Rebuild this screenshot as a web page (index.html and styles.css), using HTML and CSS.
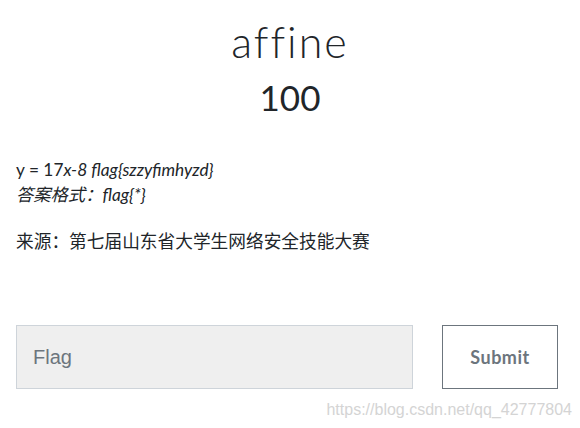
FILE: index.html
```html
<!DOCTYPE html>
<html>
<head>
<meta charset="utf-8">
<link rel="stylesheet" href="styles.css">
</head>
<body>
<div class="modal">
  <h2 class="name">affine</h2>
  <h3 class="value">100</h3>
  <div class="desc">
    <p class="formula">y = 17<em>x-8 flag{szzyfimhyzd}</em><br><em>答案格式：flag{*}</em></p>
    <p class="source">来源：第七届山东省大学生网络安全技能大赛</p>
  </div>
  <form class="submit-row">
    <input class="flag-input" type="text" placeholder="Flag">
    <button class="submit-btn" type="button">Submit</button>
  </form>
  <div class="watermark">https://blog.csdn.net/qq_42777804</div>
</div>
</body>
</html>
```
FILE: styles.css
```css
html, body {
  margin: 0;
  padding: 0;
  background: #fff;
}
body {
  font-family: Lato, "Noto Sans CJK SC", sans-serif;
  color: #212529;
}
.modal {
  padding: 0 16px;
}
.name {
  margin: 0;
  padding-top: 17px;
  text-align: center;
  font-weight: 300;
  font-size: 43px;
  line-height: 50px;
  letter-spacing: 2px;
}
.value {
  margin: 8px 0 0;
  text-align: center;
  font-weight: 400;
  font-size: 35px;
  line-height: 44px;
}
.desc {
  margin-top: 38px;
  font-size: 17.3px;
  line-height: 25px;
}
.desc p {
  margin: 0 0 22px;
}
.desc .source {
  font-size: 17.7px;
}
.submit-row {
  display: flex;
  gap: 29px;
  margin-top: 71px;
}
.flag-input {
  flex: 1;
  height: 64px;
  box-sizing: border-box;
  border: 1px solid #ced4da;
  background: #efefef;
  padding: 0 16px;
  font-family: "Liberation Sans", Arial, sans-serif;
  font-size: 20px;
  color: #495057;
  border-radius: 0;
  outline: none;
}
.flag-input::placeholder {
  color: #6c757d;
}
.submit-btn {
  width: 116px;
  height: 64px;
  margin-right: 6px;
  background: #fff;
  border: 1px solid #6c757d;
  border-radius: 0;
  font-family: Lato, sans-serif;
  font-weight: 700;
  font-size: 18px;
  color: #6c757d;
  letter-spacing: 0.5px;
}
.watermark {
  text-align: right;
  margin-top: 12px;
  margin-right: -8px;
  font-family: "Liberation Sans", Arial, sans-serif;
  font-size: 16px;
  color: #d4d4d4;
}
```
